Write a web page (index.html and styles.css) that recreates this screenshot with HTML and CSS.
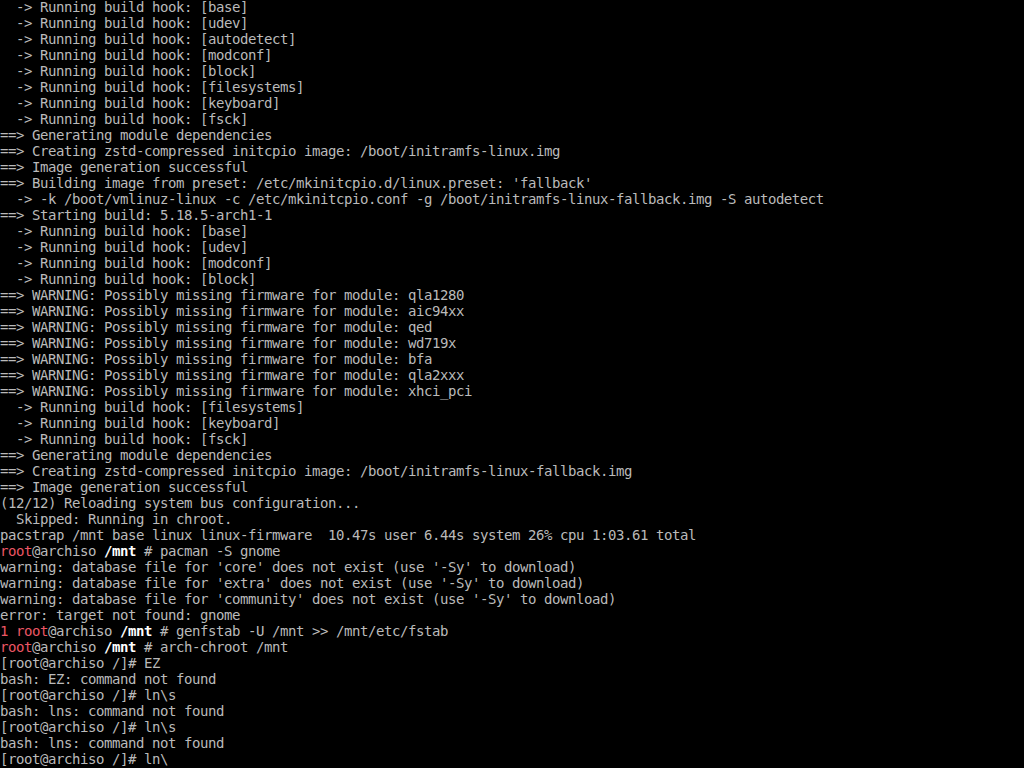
FILE: index.html
```html
<!DOCTYPE html>
<html>
<head>
<meta charset="utf-8">
<link rel="stylesheet" href="styles.css">
</head>
<body>
<div class="term">
<div class="ln">  -&gt; Running build hook: [base]</div>
<div class="ln">  -&gt; Running build hook: [udev]</div>
<div class="ln">  -&gt; Running build hook: [autodetect]</div>
<div class="ln">  -&gt; Running build hook: [modconf]</div>
<div class="ln">  -&gt; Running build hook: [block]</div>
<div class="ln">  -&gt; Running build hook: [filesystems]</div>
<div class="ln">  -&gt; Running build hook: [keyboard]</div>
<div class="ln">  -&gt; Running build hook: [fsck]</div>
<div class="ln">==&gt; Generating module dependencies</div>
<div class="ln">==&gt; Creating zstd-compressed initcpio image: /boot/initramfs-linux.img</div>
<div class="ln">==&gt; Image generation successful</div>
<div class="ln">==&gt; Building image from preset: /etc/mkinitcpio.d/linux.preset: 'fallback'</div>
<div class="ln">  -&gt; -k /boot/vmlinuz-linux -c /etc/mkinitcpio.conf -g /boot/initramfs-linux-fallback.img -S autodetect</div>
<div class="ln">==&gt; Starting build: 5.18.5-arch1-1</div>
<div class="ln">  -&gt; Running build hook: [base]</div>
<div class="ln">  -&gt; Running build hook: [udev]</div>
<div class="ln">  -&gt; Running build hook: [modconf]</div>
<div class="ln">  -&gt; Running build hook: [block]</div>
<div class="ln">==&gt; WARNING: Possibly missing firmware for module: qla1280</div>
<div class="ln">==&gt; WARNING: Possibly missing firmware for module: aic94xx</div>
<div class="ln">==&gt; WARNING: Possibly missing firmware for module: qed</div>
<div class="ln">==&gt; WARNING: Possibly missing firmware for module: wd719x</div>
<div class="ln">==&gt; WARNING: Possibly missing firmware for module: bfa</div>
<div class="ln">==&gt; WARNING: Possibly missing firmware for module: qla2xxx</div>
<div class="ln">==&gt; WARNING: Possibly missing firmware for module: xhci_pci</div>
<div class="ln">  -&gt; Running build hook: [filesystems]</div>
<div class="ln">  -&gt; Running build hook: [keyboard]</div>
<div class="ln">  -&gt; Running build hook: [fsck]</div>
<div class="ln">==&gt; Generating module dependencies</div>
<div class="ln">==&gt; Creating zstd-compressed initcpio image: /boot/initramfs-linux-fallback.img</div>
<div class="ln">==&gt; Image generation successful</div>
<div class="ln">(12/12) Reloading system bus configuration...</div>
<div class="ln">  Skipped: Running in chroot.</div>
<div class="ln">pacstrap /mnt base linux linux-firmware  10.47s user 6.44s system 26% cpu 1:03.61 total</div>
<div class="ln"><span class="red">root</span>@archiso <span class="hi">/mnt</span> # pacman -S gnome</div>
<div class="ln">warning: database file for 'core' does not exist (use '-Sy' to download)</div>
<div class="ln">warning: database file for 'extra' does not exist (use '-Sy' to download)</div>
<div class="ln">warning: database file for 'community' does not exist (use '-Sy' to download)</div>
<div class="ln">error: target not found: gnome</div>
<div class="ln"><span class="red">1 root</span>@archiso <span class="hi">/mnt</span> # genfstab -U /mnt &gt;&gt; /mnt/etc/fstab</div>
<div class="ln"><span class="red">root</span>@archiso <span class="hi">/mnt</span> # arch-chroot /mnt</div>
<div class="ln">[root@archiso /]# EZ</div>
<div class="ln">bash: EZ: command not found</div>
<div class="ln">[root@archiso /]# ln\s</div>
<div class="ln">bash: lns: command not found</div>
<div class="ln">[root@archiso /]# ln\s</div>
<div class="ln">bash: lns: command not found</div>
<div class="ln">[root@archiso /]# ln\</div>
</div>
</body>
</html>
```
FILE: styles.css
```css
html, body {
  margin: 0;
  padding: 0;
  background: #000;
}
.term {
  width: 1024px;
  height: 768px;
  overflow: hidden;
  background: #000;
  color: #bababa;
  font-family: "DejaVu Sans Mono", "Liberation Mono", monospace;
  font-size: 14px;
  letter-spacing: -0.43px;
}
.ln {
  height: 16px;
  line-height: 14px;
  white-space: pre;
}
.red {
  color: #ec5664;
}
.hi {
  color: #ffffff;
  font-weight: bold;
}
```
